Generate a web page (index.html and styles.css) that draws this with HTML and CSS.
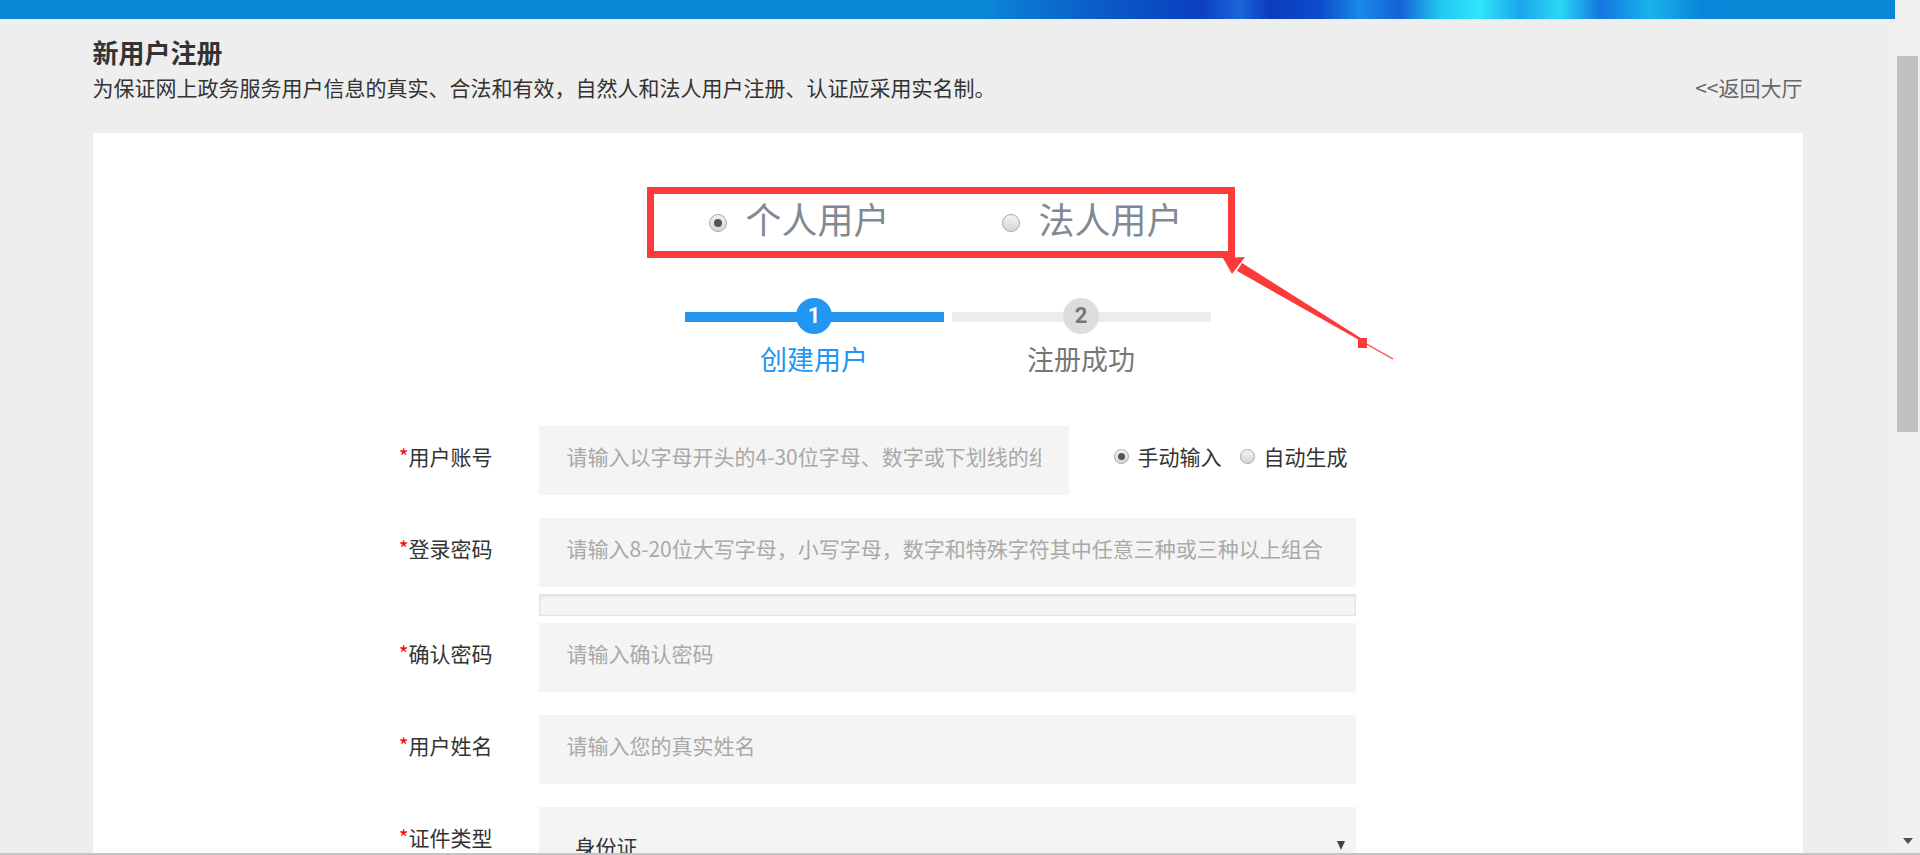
FILE: index.html
```html
<!DOCTYPE html>
<html>
<head>
  <meta charset="utf-8">
  <title>新用户注册</title>
  <link rel="stylesheet" href="styles.css">
</head>
<body>
  <div class="screen">
    <div class="viewport">
      <div class="banner"></div>
      <div class="wrap">
        <div class="page-head">
          <h1>新用户注册</h1>
          <div class="sub-row">
            <p>为保证网上政务服务用户信息的真实、合法和有效，自然人和法人用户注册、认证应采用实名制。</p>
            <a href="#" class="back-link">&lt;&lt;返回大厅</a>
          </div>
        </div>

        <div class="card">
          <div class="type-box">
            <label class="type-opt"><span class="radio big checked"></span><span class="type-text">个人用户</span></label>
            <label class="type-opt"><span class="radio big"></span><span class="type-text">法人用户</span></label>
          </div>

          <!-- annotation arrow pointing at the user type box -->
          <svg class="mark-arrow" width="200" height="120" viewBox="0 0 200 120">
            <polygon points="10,10 32,9 19,26" fill="#fd3a3a"/>
            <polygon points="24,23 29,15 152.5,93 151.5,95" fill="#fd3a3a"/>
            <rect x="145" y="90" width="9" height="10" fill="#fd3a3a"/>
            <line x1="150" y1="94" x2="180" y2="111" stroke="#fd3a3a" stroke-width="1.2"/>
          </svg>

          <div class="steps">
            <div class="step active">
              <div class="step-head"><span class="step-num">1</span></div>
              <div class="step-label">创建用户</div>
            </div>
            <div class="step">
              <div class="step-head"><span class="step-num">2</span></div>
              <div class="step-label">注册成功</div>
            </div>
          </div>

          <form class="reg-form">
            <div class="form-row">
              <label class="form-label"><i>*</i>用户账号</label>
              <input type="text" class="form-input short" placeholder="请输入以字母开头的4-30位字母、数字或下划线的组合">
              <div class="account-mode">
                <label class="mode-opt"><span class="radio checked"></span>手动输入</label>
                <label class="mode-opt"><span class="radio"></span>自动生成</label>
              </div>
            </div>
            <div class="form-row tight">
              <label class="form-label"><i>*</i>登录密码</label>
              <input type="password" class="form-input" placeholder="请输入8-20位大写字母，小写字母，数字和特殊字符其中任意三种或三种以上组合">
            </div>
            <div class="strength"></div>
            <div class="form-row">
              <label class="form-label"><i>*</i>确认密码</label>
              <input type="password" class="form-input" placeholder="请输入确认密码">
            </div>
            <div class="form-row">
              <label class="form-label"><i>*</i>用户姓名</label>
              <input type="text" class="form-input" placeholder="请输入您的真实姓名">
            </div>
            <div class="form-row">
              <label class="form-label"><i>*</i>证件类型</label>
              <div class="select-wrap">
                <select class="form-select">
                  <option>身份证</option>
                  <option>护照</option>
                </select>
                <svg class="select-arrow" width="8" height="9" viewBox="0 0 8 9"><path d="M0 0H8L4 9Z" fill="#444"/></svg>
              </div>
            </div>
          </form>
        </div>
      </div>
    </div>
    <div class="scrollbar">
      <div class="thumb"></div>
      <div class="down"></div>
    </div>
  </div>
  <div class="hbar"></div>
</body>
</html>
```

FILE: styles.css
```css
body {
  margin: 0;
  background: #eeeeee;
  font-family: "Noto Sans CJK SC", "Microsoft YaHei", sans-serif;
  color: #333;
}
.screen {
  display: flex;
  height: 853px;
}
.viewport {
  flex: 1;
  overflow: hidden;
  background: #eeeeee;
}
.scrollbar {
  width: 25px;
  background: #f0f0f0;
  display: flex;
  flex-direction: column;
  align-items: center;
}
.scrollbar .thumb {
  margin-top: 56px;
  width: 21px;
  height: 376px;
  background: #c1c1c1;
}
.scrollbar .down {
  margin-top: auto;
  margin-bottom: 9px;
  width: 0;
  height: 0;
  border-left: 5px solid transparent;
  border-right: 5px solid transparent;
  border-top: 6px solid #505050;
}
.hbar {
  height: 2px;
  background: #c4c4c4;
}
.banner {
  height: 19px;
  background: linear-gradient(90deg, #0a86d6 0, #0a86d6 990px, #0a80d4 1000px, #0a5cc8 1100px, #0b3fc0 1200px, #1a66d8 1240px, #0b3bbd 1270px, #0e4ccc 1320px, #1a8ae6 1360px, #1560d6 1400px, #22c8f0 1440px, #30e6fa 1480px, #1aa6ea 1520px, #2ad8f6 1560px, #1476de 1600px, #1ab4ec 1650px, #0a86d8 1700px, #0a86d6 100%);
}
.wrap {
  width: 1710px;
  margin: 0 auto;
}
.page-head {
  padding: 16px 0 32px;
}
.page-head h1 {
  margin: 0;
  font-size: 26px;
  line-height: 34px;
  font-weight: bold;
  color: #333;
}
.sub-row {
  display: flex;
  justify-content: space-between;
  margin-top: 4px;
  font-size: 21px;
  line-height: 28px;
}
.sub-row p {
  margin: 0;
}
.back-link {
  color: #666;
  text-decoration: none;
}

.card {
  position: relative;
  background: #fff;
  padding: 54px 0 80px;
}
.type-box {
  display: flex;
  align-items: center;
  gap: 112px;
  width: 588px;
  height: 71px;
  margin-left: 554px;
  padding-left: 55px;
  box-sizing: border-box;
  border: 7px solid #fd3a3a;
}
.type-opt {
  display: flex;
  align-items: center;
  gap: 19px;
  font-size: 36px;
  line-height: 44px;
  color: #818a93;
}
.type-text {
  margin-bottom: 10px;
}
.radio {
  display: inline-block;
  position: relative;
  width: 15px;
  height: 15px;
  border-radius: 50%;
  border: 1px solid #a9a9a9;
  background: linear-gradient(#f4f4f4, #d6d6d6);
  box-sizing: border-box;
}
.radio.big {
  width: 18px;
  height: 18px;
}
.radio.checked::after {
  content: "";
  position: absolute;
  left: 50%;
  top: 50%;
  width: 7px;
  height: 7px;
  margin: -3.5px 0 0 -3.5px;
  border-radius: 50%;
  background: #555;
}
.radio.big.checked::after {
  width: 8px;
  height: 8px;
  margin: -4px 0 0 -4px;
}
.mark-arrow {
  position: absolute;
  left: 1120px;
  top: 115px;
}

.steps {
  display: flex;
  justify-content: center;
  gap: 8px;
  margin-top: 40px;
}
.step {
  width: 259px;
  display: flex;
  flex-direction: column;
  align-items: center;
}
.step-head {
  align-self: stretch;
  height: 36px;
  display: flex;
  justify-content: center;
  background: linear-gradient(transparent 14px, #ececec 14px, #ececec 24px, transparent 24px);
}
.step-num {
  width: 36px;
  height: 36px;
  border-radius: 50%;
  background: #dddddd;
  color: #777;
  font-family: Roboto, "Liberation Sans", sans-serif;
  font-size: 22px;
  font-weight: bold;
  line-height: 36px;
  text-align: center;
}
.step-label {
  margin-top: 10px;
  font-size: 27px;
  line-height: 30px;
  color: #777;
}
.step.active .step-head {
  background: linear-gradient(transparent 14px, #2196f3 14px, #2196f3 24px, transparent 24px);
}
.step.active .step-num {
  background: #2196f3;
  color: #fff;
}
.step.active .step-label {
  color: #2196f3;
}

.reg-form {
  margin-top: 52px;
}
.form-row {
  display: flex;
  align-items: center;
  margin-bottom: 23px;
}
.form-row.tight {
  margin-bottom: 7px;
}
.form-label {
  width: 400px;
  margin: 0 46px 9px 0;
  text-align: right;
  font-size: 21px;
  line-height: 28px;
  color: #333;
}
.form-label i {
  font-style: normal;
  color: #f00;
}
.form-input {
  width: 817px;
  height: 69px;
  padding: 0 28px 9px;
  box-sizing: border-box;
  border: none;
  background: #f4f4f4;
  font-family: inherit;
  font-size: 21px;
  color: #333;
  outline: none;
}
.form-input::placeholder {
  color: #a9a9a9;
}
.form-input.short {
  width: 530px;
}
.account-mode {
  display: flex;
  align-items: center;
  gap: 18px;
  margin: 0 0 9px 45px;
  font-size: 21px;
  color: #333;
}
.mode-opt {
  display: flex;
  align-items: center;
  gap: 9px;
}
.strength {
  width: 817px;
  height: 22px;
  margin: 0 0 7px 446px;
  box-sizing: border-box;
  border: 1px solid #e4e4e4;
  background: #f5f5f5;
  box-shadow: inset 0 2px 3px rgba(0, 0, 0, 0.08);
}
.select-wrap {
  position: relative;
  width: 817px;
}
.form-select {
  width: 100%;
  height: 69px;
  padding: 8px 30px 0 36px;
  border: none;
  background: #f4f4f4;
  -webkit-appearance: none;
  appearance: none;
  font-family: inherit;
  font-size: 21px;
  color: #333;
  outline: none;
}
.select-arrow {
  position: absolute;
  right: 11px;
  top: 34px;
}
```
